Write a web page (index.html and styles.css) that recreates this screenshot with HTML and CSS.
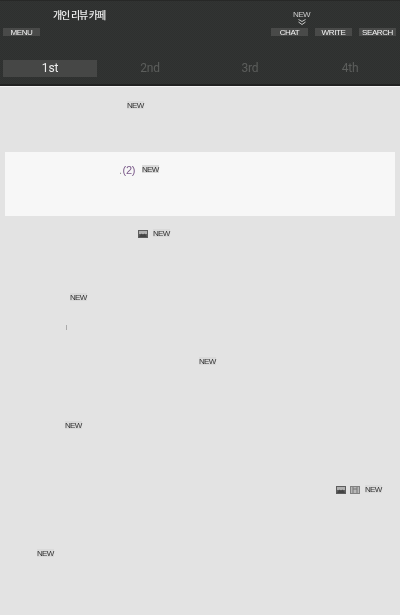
FILE: index.html
```html
<!DOCTYPE html>
<html lang="ko">
<head>
    <meta charset="UTF-8">
    <meta name="viewport" content="width=device-width, initial-scale=1.0">
    <title>개인 리뷰 카페</title>
    <link rel="stylesheet" href="styles.css">
</head>
<body>

    <header class="top">
        <div class="top-title">
            <h1>개인 리뷰 카페</h1>
            <div class="chat-new">
                <span>NEW</span>
                <svg width="8" height="6" viewBox="0 0 8 6"><path d="M0.5 0.5L4 2.5L7.5 0.5M0.5 3L4 5.5L7.5 3" fill="none" stroke="#c8c8c8" stroke-width="1"/></svg>
            </div>
        </div>
        <div class="top-buttons">
            <button class="top-button">MENU</button>
            <div class="top-right">
                <button class="top-button">CHAT</button>
                <button class="top-button">WRITE</button>
                <button class="top-button">SEARCH</button>
            </div>
        </div>
        <div class="tabs">
            <button class="tab active">1st</button>
            <button class="tab">2nd</button>
            <button class="tab">3rd</button>
            <button class="tab">4th</button>
        </div>
    </header>

    <div class="list">
        <div class="row" style="padding-left: 127px"><span class="new">NEW</span></div>
        <div class="row selected" style="padding-left: 114px">
            <span class="count"><span class="dot">.</span> (2)</span><span class="new">NEW</span>
        </div>
        <div class="row" style="padding-left: 138px">
            <svg class="icon" viewBox="0 0 10 8"><rect width="10" height="8" fill="#5c5c5c"/><rect x="1" y="1" width="8" height="3" fill="#b0b0b0"/><path d="M1 7L3.5 3.5L5 5L6.5 3.5L9 7Z" fill="#444"/></svg>
            <span class="new gap">NEW</span>
        </div>
        <div class="row" style="padding-left: 70px"><span class="new">NEW</span><i class="tick"></i></div>
        <div class="row" style="padding-left: 199px"><span class="new">NEW</span></div>
        <div class="row" style="padding-left: 65px"><span class="new">NEW</span></div>
        <div class="row" style="padding-left: 336px">
            <svg class="icon" viewBox="0 0 10 8"><rect width="10" height="8" fill="#5c5c5c"/><rect x="1" y="1" width="8" height="3" fill="#b0b0b0"/><path d="M1 7L3.5 3.5L5 5L6.5 3.5L9 7Z" fill="#444"/></svg>
            <svg class="icon second" viewBox="0 0 10 8"><rect width="10" height="8" fill="#808080"/><rect x="1" y="1" width="8" height="6" fill="#b8b8b8"/><path d="M3 1V7M7 1V7M3 3H7" stroke="#777" fill="none"/></svg>
            <span class="new gap">NEW</span>
        </div>
        <div class="row" style="padding-left: 37px"><span class="new">NEW</span></div>
    </div>

</body>
</html>
```

FILE: styles.css
```css
* {
    box-sizing: border-box;
}

html, body {
    height: 100%;
}

body {
    margin: 0;
    background-color: #e3e3e3;
    font-family: "Liberation Sans", Arial, sans-serif;
    overflow: hidden;
}

.top {
    height: 86px;
    background-color: #303231;
    background-image: repeating-conic-gradient(#2e302f 0 25%, #323433 0 50%);
    background-size: 2px 2px;
    border-top: 1px solid #272827;
    border-bottom: 2px solid #222;
    box-shadow: 0 1px 0 #f4f4f4;
}

.top-title {
    height: 26px;
    position: relative;
    padding: 8px 0 0 53px;
}

.top-title h1 {
    margin: 0;
    font-family: "Noto Sans CJK KR", sans-serif;
    font-size: 10px;
    letter-spacing: -1.1px;
    line-height: 12px;
    font-weight: 500;
    color: #eee;
    filter: blur(0.3px);
}

.chat-new {
    position: absolute;
    left: 293px;
    top: 10px;
    width: 17px;
    display: flex;
    flex-direction: column;
    align-items: center;
    font-size: 8px;
    letter-spacing: -0.6px;
    line-height: 8px;
    color: #ccc;
    filter: blur(0.3px);
}

.top-buttons {
    display: flex;
    justify-content: space-between;
    padding: 1px 4px 0 3px;
}

.top-right {
    display: flex;
    gap: 7px;
}

.top-button {
    width: 37px;
    height: 8px;
    padding: 1px 0 0;
    border: none;
    background-color: #494a49;
    color: #f4f4f4;
    font-family: inherit;
    font-size: 8px;
    letter-spacing: -0.4px;
    line-height: 8px;
    white-space: nowrap;
    filter: blur(0.25px);
}

.tabs {
    display: grid;
    grid-template-columns: repeat(4, 94px);
    gap: 6px;
    padding: 24px 3px 0;
}

.tab {
    height: 17px;
    padding: 0;
    border: none;
    background: none;
    color: #5c5e5c;
    font-family: "Roboto", sans-serif;
    font-size: 12px;
    letter-spacing: -0.2px;
    line-height: 17px;
    filter: blur(0.25px);
}

.tab.active {
    background-color: #464746;
    color: #eee;
}

.list {
    padding-top: 2px;
}

.row {
    height: 64px;
    display: flex;
    align-items: flex-start;
    padding-top: 13px;
    position: relative;
}

.row.selected {
    margin: 0 5px;
    background-color: #f7f7f7;
}

.new {
    display: inline-block;
    height: 8px;
    background-color: #dadada;
    color: #333;
    font-size: 8px;
    letter-spacing: -0.7px;
    line-height: 9px;
    filter: blur(0.3px);
}

.new.gap {
    margin-left: 5px;
}

.count {
    width: 23px;
    color: #7b5a8a;
    font-size: 11px;
    letter-spacing: -0.3px;
    word-spacing: -2px;
    line-height: 10px;
    white-space: nowrap;
    filter: blur(0.25px);
}

.dot {
    color: #999;
}

.icon {
    width: 10px;
    height: 8px;
    flex: none;
    margin-top: 1px;
    filter: blur(0.3px);
}

.icon.second {
    margin-left: 4px;
}

.tick {
    position: absolute;
    left: 66px;
    top: 45px;
    width: 1px;
    height: 5px;
    background-color: #aaa;
}
```
